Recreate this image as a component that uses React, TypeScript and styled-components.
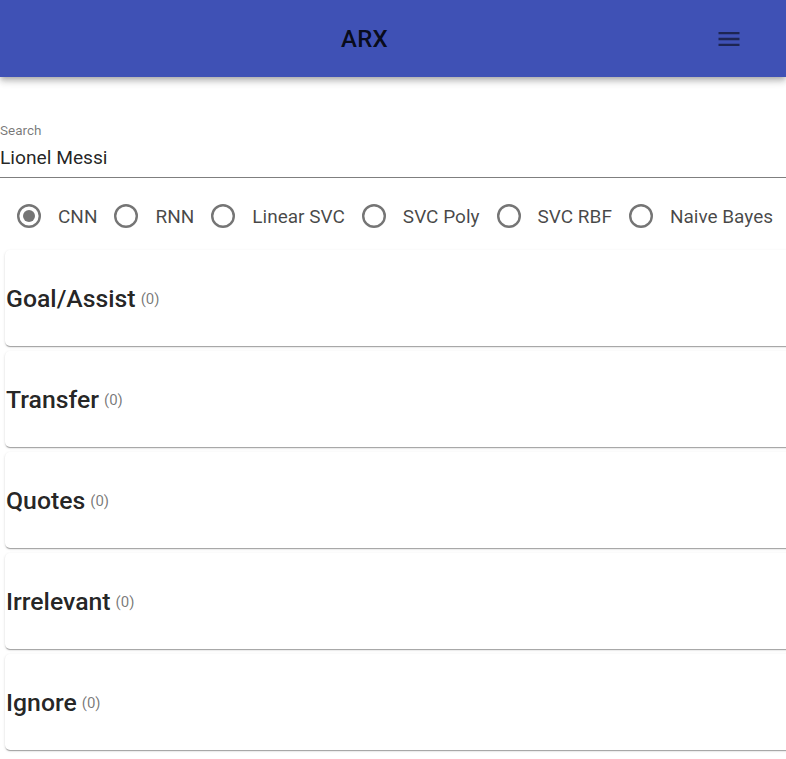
import React, { useState } from "react";
import styled, { createGlobalStyle } from "styled-components";

const GlobalStyle = createGlobalStyle`
  html, body {
    margin: 0;
    padding: 0;
    background: #fff;
    font-family: Roboto, "Liberation Sans", sans-serif;
    overflow-x: hidden;
  }
`;

const models = ["CNN", "RNN", "Linear SVC", "SVC Poly", "SVC RBF", "Naive Bayes"];
const categories = ["Goal/Assist", "Transfer", "Quotes", "Irrelevant", "Ignore"];

const App = () => {
  const [model, setModel] = useState("CNN");

  return (
    <Page>
      <GlobalStyle />
      <AppBar>
        <Title>ARX</Title>
        <IconButton aria-label="menu">
          <svg width="28" height="28" viewBox="0 0 24 24">
            <path
              d="M3 18h18v-2H3v2zm0-5h18v-2H3v2zm0-7v2h18V6H3z"
              fill="rgba(0,0,0,0.54)"
            />
          </svg>
        </IconButton>
      </AppBar>

      <Field>
        <Label>Search</Label>
        <Input defaultValue="Lionel Messi" />
      </Field>

      <RadioRow>
        {models.map((m) => (
          <RadioItem key={m} onClick={() => setModel(m)}>
            <svg width="24" height="24" viewBox="0 0 24 24">
              <circle
                cx="12"
                cy="12"
                r="10.8"
                fill="none"
                stroke="#757575"
                strokeWidth="2.4"
              />
              {model === m && <circle cx="12" cy="12" r="6" fill="#757575" />}
            </svg>
            <RadioLabel>{m}</RadioLabel>
          </RadioItem>
        ))}
      </RadioRow>

      <CardList>
        {categories.map((c) => (
          <Card key={c}>
            <CardTitle>{c}</CardTitle>
            <Count>(0)</Count>
          </Card>
        ))}
      </CardList>
    </Page>
  );
};

export default App;

const Page = styled.div`
  width: 100%;
  overflow: hidden;
`;

const AppBar = styled.header`
  display: flex;
  align-items: center;
  height: 77px;
  padding-right: 33px;
  background: #3f51b5;
  box-shadow: 0 2px 5px -1px rgba(0, 0, 0, 0.2), 0 5px 6px 0 rgba(0, 0, 0, 0.14),
    0 1px 12px 0 rgba(0, 0, 0, 0.12);
  position: relative;
  z-index: 2;
`;

const Title = styled.h1`
  flex: 1;
  margin: 0;
  padding-left: 24px;
  text-align: center;
  font-size: 24px;
  font-weight: 500;
  color: rgba(0, 0, 0, 0.87);
  letter-spacing: 0.2px;
`;

const IconButton = styled.button`
  display: flex;
  align-items: center;
  justify-content: center;
  width: 48px;
  height: 48px;
  padding: 0;
  border: none;
  background: transparent;
  cursor: pointer;
`;

const Field = styled.div`
  display: flex;
  flex-direction: column;
  margin-top: 45px;
  border-bottom: 1px solid rgba(0, 0, 0, 0.5);
`;

const Label = styled.label`
  font-size: 13.5px;
  line-height: 16px;
  color: rgba(0, 0, 0, 0.54);
`;

const Input = styled.input`
  margin-top: 8px;
  padding: 0 0 8px;
  border: none;
  outline: none;
  font-family: inherit;
  font-size: 19.2px;
  line-height: 23px;
  color: rgba(0, 0, 0, 0.87);
  background: transparent;
`;

const RadioRow = styled.div`
  display: flex;
  align-items: center;
  height: 48px;
  margin-top: 14px;
  padding-left: 17px;
  white-space: nowrap;
`;

const RadioItem = styled.label`
  display: flex;
  align-items: center;
  gap: 17px;
  margin-right: 17px;
  cursor: pointer;

  svg {
    flex-shrink: 0;
  }
`;

const RadioLabel = styled.span`
  font-size: 19px;
  color: rgba(0, 0, 0, 0.72);
`;

const CardList = styled.div`
  display: flex;
  flex-direction: column;
  gap: 5px;
  margin-top: 10px;
  padding: 0 0 10px 5px;
`;

const Card = styled.div`
  display: flex;
  align-items: center;
  gap: 5px;
  height: 96px;
  margin-right: -20px;
  padding-left: 1px;
  border-radius: 5px;
  background: #fff;
  box-shadow: 0 2px 1px -1px rgba(0, 0, 0, 0.2), 0 1px 1px 0 rgba(0, 0, 0, 0.14),
    0 1px 3px 0 rgba(0, 0, 0, 0.12);
`;

const CardTitle = styled.h2`
  margin: 0;
  font-size: 24.8px;
  font-weight: 500;
  color: rgba(0, 0, 0, 0.87);
`;

const Count = styled.span`
  font-size: 15px;
  color: rgba(0, 0, 0, 0.54);
  margin-top: 2px;
`;
